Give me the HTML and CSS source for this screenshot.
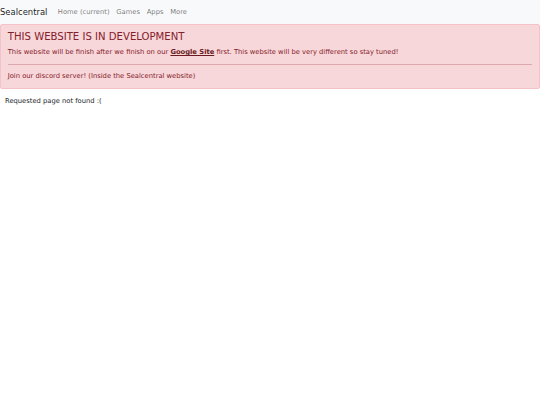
FILE: index.html
```html
<!DOCTYPE html>
<html>
<head>
<meta charset="utf-8">
<link rel="stylesheet" href="styles.css">
</head>
<body>
<nav class="navbar">
  <a class="brand" href="#">Sealcentral</a>
  <ul class="nav">
    <li><a class="nav-link" href="#">Home (current)</a></li>
    <li><a class="nav-link" href="#">Games</a></li>
    <li><a class="nav-link" href="#">Apps</a></li>
    <li><a class="nav-link" href="#">More</a></li>
  </ul>
</nav>
<div class="alert">
  <h4 class="alert-heading">THIS WEBSITE IS IN DEVELOPMENT</h4>
  <p class="alert-text">This website will be finish after we finish on our <a class="alert-link" href="#">Google Site</a> first. This website will be very different so stay tuned!</p>
  <hr class="divider">
  <p class="alert-last">Join our discord server! (Inside the Sealcentral website)</p>
</div>
<p class="notfound">Requested page not found :(</p>
</body>
</html>
```
FILE: styles.css
```css
html { font-size: 6.75px; }
body {
  margin: 0;
  font-family: "DejaVu Sans", sans-serif;
  font-size: 1rem;
  line-height: 1.5;
  color: #212529;
  background: #fff;
}
.navbar {
  display: flex;
  align-items: center;
  background: #f8f9fa;
  padding: 3.4px 0;
}
.brand {
  font-size: 1.25rem;
  padding: 1.9px 0;
  margin-right: 7px;
  color: rgba(0,0,0,.9);
  text-decoration: none;
}
.nav {
  display: flex;
  list-style: none;
  margin: 0;
  padding: 0;
}
.nav-link {
  display: block;
  padding: 3.4px;
  color: rgba(0,0,0,.55);
  text-decoration: none;
}
.alert {
  background: #f8d7da;
  border: 0.5px solid #f5c2c7;
  border-radius: 2px;
  color: #842029;
  padding: 6.75px;
  margin-bottom: 6.75px;
}
.alert-heading {
  font-size: 1.5rem;
  font-weight: 400;
  line-height: 1.2;
  margin: 0 0 3.4px;
}
.alert-text { margin: 0; }
.alert-link { color: #6a1a21; font-weight: 700; }
.divider {
  margin: 6.5px 0;
  border: 0;
  border-top: 1px solid #842029;
  opacity: .25;
}
.alert-last { margin: 0; }
.notfound { margin: 0; padding-left: 5px; }
```
